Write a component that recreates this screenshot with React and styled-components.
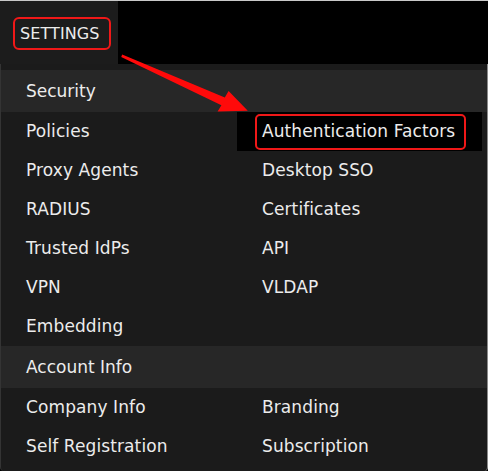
import React from "react";
import styled, { createGlobalStyle } from "styled-components";

const GlobalStyle = createGlobalStyle`
  html, body { margin: 0; padding: 0; background: #000; }
  body { font-family: "DejaVu Sans", "Liberation Sans", sans-serif; }
  * { box-sizing: border-box; }
`;

const Frame = styled.div`
  position: relative;
  width: 488px;
  height: 471px;
  overflow: hidden;
  background: #000;
`;

const TopBar = styled.div`
  display: flex;
  height: 64px;
  border-top: 1px solid #c9c9c9;
  background: #000;
`;

const NavTab = styled.div`
  width: 118px;
  display: flex;
  align-items: center;
  padding: 2px 0 0 20px;
  background: #1c1c1c;
  color: #ececec;
  font-size: 16px;
  letter-spacing: 0.1px;
  text-transform: uppercase;
`;

const Panel = styled.div`
  background: #1b1b1b;
  border-left: 1px solid #343434;
  border-right: 1px solid #8a8a8a;
  border-radius: 0 0 4px 4px;
  padding: 6px 0 5px;
  height: 407px;
`;

const SectionHeader = styled.div`
  height: 42px;
  line-height: 42px;
  padding-left: 25px;
  background: #272727;
  color: #ececec;
  font-size: 17px;
`;

const Grid = styled.div`
  display: grid;
  grid-template-columns: 236px 245px;
`;

const Item = styled.div`
  height: 39px;
  line-height: 39px;
  padding-left: 25px;
  font-size: 17px;
  letter-spacing: 0.1px;
  color: #ececec;
  background: ${(p) => (p.$active ? "#000" : "transparent")};
  white-space: nowrap;
`;

const Callout = styled.div`
  position: absolute;
  left: ${(p) => p.$x}px;
  top: ${(p) => p.$y}px;
  width: ${(p) => p.$w}px;
  height: ${(p) => p.$h}px;
  border: 2px solid #f01818;
  border-radius: ${(p) => p.$r}px;
  pointer-events: none;
`;

const ArrowLayer = styled.svg`
  position: absolute;
  left: 0;
  top: 0;
  width: 488px;
  height: 471px;
  pointer-events: none;
`;

const sections = [
  {
    title: "Security",
    rows: [
      ["Policies", "Authentication Factors"],
      ["Proxy Agents", "Desktop SSO"],
      ["RADIUS", "Certificates"],
      ["Trusted IdPs", "API"],
      ["VPN", "VLDAP"],
      ["Embedding", ""],
    ],
  },
  {
    title: "Account Info",
    rows: [
      ["Company Info", "Branding"],
      ["Self Registration", "Subscription"],
    ],
  },
];

export default function App() {
  return (
    <>
      <GlobalStyle />
      <Frame>
        <TopBar>
          <NavTab>Settings</NavTab>
        </TopBar>
        <Panel>
          {sections.map((s) => (
            <React.Fragment key={s.title}>
              <SectionHeader>{s.title}</SectionHeader>
              <Grid>
                {s.rows.flat().map((label, i) => (
                  <Item key={i} $active={label === "Authentication Factors"}>
                    {label}
                  </Item>
                ))}
              </Grid>
            </React.Fragment>
          ))}
        </Panel>
        <Callout $x={13} $y={17} $w={98} $h={33} $r={6} />
        <Callout $x={255} $y={114} $w={211} $h={36} $r={5} />
        <ArrowLayer viewBox="0 0 488 471">
          <polygon
            points="122.2,54.4 224.8,97.4 228.6,91 247.8,110.8 217.6,111.6 221.4,105.2 121.2,57"
            fill="#ff0a0a"
          />
        </ArrowLayer>
      </Frame>
    </>
  );
}
